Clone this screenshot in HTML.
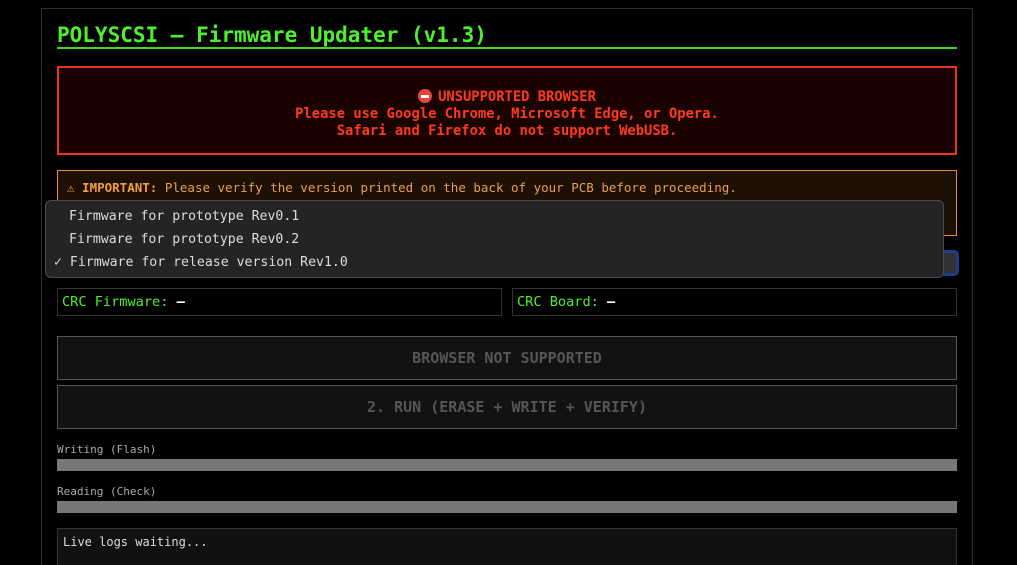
<!DOCTYPE html>
<html style="overflow:hidden;height:565px"><head><meta charset="utf-8"><style>
body{margin:0;width:1017px;height:565px;background:#000;overflow:hidden;font-family:"DejaVu Sans Mono","Liberation Mono",monospace;position:relative}
.a{position:absolute;box-sizing:border-box}
</style></head><body>
<div class="a" style="left:41px;top:8px;width:932px;height:557px;border:1px solid #2e2e2e;border-bottom:none"></div>
<div class="a" style="left:57px;top:20px;font-size:21px;font-weight:bold;color:#4cf02c;white-space:nowrap;line-height:30px">POLYSCSI – Firmware Updater (v1.3)</div>
<div class="a" style="left:57px;top:47px;width:900px;height:2px;background:#3fd820"></div>
<div class="a" style="left:57px;top:66px;width:900px;height:89px;border:2px solid #ec3418;background:#1a0200;color:#ff3a1c;font-size:13.8px;font-weight:bold;text-align:center;line-height:17px;padding-top:21px">
<div><span style="display:inline-block;width:14px;height:14px;border-radius:50%;background:#e8463a;vertical-align:-2px;position:relative;margin-right:6px"><span style="position:absolute;left:3px;top:6px;width:8px;height:2.5px;background:#fff"></span></span>UNSUPPORTED BROWSER</div>
<div>Please use Google Chrome, Microsoft Edge, or Opera.</div>
<div>Safari and Firefox do not support WebUSB.</div></div>
<div class="a" style="left:57px;top:170px;width:900px;height:66px;border:1px solid #e88b3a;background:#1e1004;color:#e8a050;font-size:12.5px;padding:9px 9px;white-space:nowrap"><b style="color:#f0a040">⚠ IMPORTANT:</b> Please verify the version printed on the back of your PCB before proceeding.</div>
<div class="a" style="left:938px;top:250px;width:21px;height:26px;border:3px solid #1c3c8c;border-radius:5px;background:#333"></div>
<div class="a" style="left:45px;top:200px;width:899px;height:78px;background:#242426;border:1px solid #4a4a4c;border-radius:6px;color:#dcdcdc;font-size:13.2px;line-height:23px;padding-top:4px">
<div style="padding-left:23px">Firmware for prototype Rev0.1</div>
<div style="padding-left:23px">Firmware for prototype Rev0.2</div>
<div style="padding-left:8px">✓ Firmware for release version Rev1.0</div></div>
<div class="a" style="left:57px;top:288px;width:445px;height:28px;border:1px solid #333;color:#4cf02c;font-size:13.6px;padding:5px 4px;line-height:16px">CRC Firmware: <b style="color:#fff">–</b></div>
<div class="a" style="left:512px;top:288px;width:445px;height:28px;border:1px solid #333;color:#4cf02c;font-size:13.6px;padding:5px 4px;line-height:16px">CRC Board: <b style="color:#fff">–</b></div>
<div class="a" style="left:57px;top:336px;width:900px;height:44px;border:1px solid #555;background:#121212;color:#555;font-size:15px;font-weight:bold;text-align:center;line-height:42px">BROWSER NOT SUPPORTED</div>
<div class="a" style="left:57px;top:385px;width:900px;height:44px;border:1px solid #555;background:#121212;color:#555;font-size:15px;font-weight:bold;text-align:center;line-height:42px">2. RUN (ERASE + WRITE + VERIFY)</div>
<div class="a" style="left:57px;top:443px;font-size:11px;color:#aaa;line-height:14px">Writing (Flash)</div>
<div class="a" style="left:57px;top:459px;width:900px;height:12px;background:#777"></div>
<div class="a" style="left:57px;top:485px;font-size:11px;color:#aaa;line-height:14px">Reading (Check)</div>
<div class="a" style="left:57px;top:501px;width:900px;height:12px;background:#777"></div>
<div class="a" style="left:57px;top:528px;width:900px;height:37px;border:1px solid #333;border-bottom:none;background:#111;color:#ddd;font-size:12px;padding:5px 5px;line-height:16px">Live logs waiting...</div>
</body></html>
